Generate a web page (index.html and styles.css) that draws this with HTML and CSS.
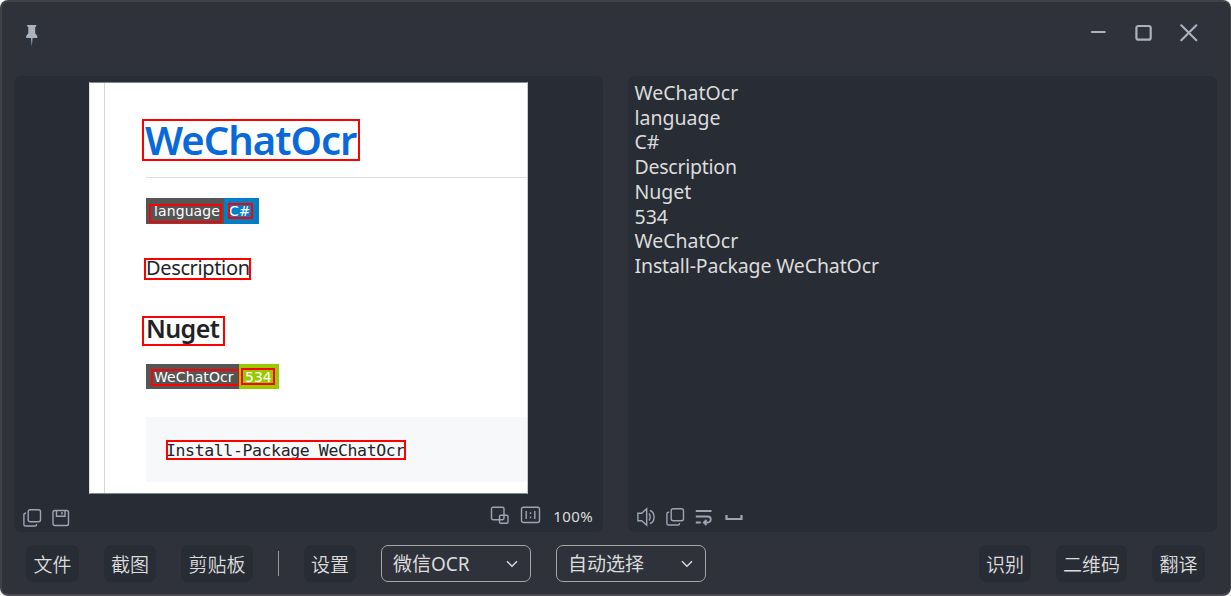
FILE: index.html
```html
<!DOCTYPE html>
<html lang="zh-CN">
<head>
<meta charset="utf-8">
<title>OCR</title>
<link rel="stylesheet" href="styles.css">
</head>
<body>
<div class="window">
  <header class="titlebar">
    <svg class="pin" width="12" height="22" viewBox="0 0 12 22"><path fill="currentColor" d="M1.2 0h9v1.6l-1 .5v6.2l2.1 2.6V13H6.6l-.8 8.500L5 13H.2v-2.100l2.100-2.600V2.100l-1.100-.5z"/></svg>
    <div class="controls">
      <svg width="16" height="18" viewBox="0 0 16 18"><path d="M1.800 8.100h13" stroke-width="2"/></svg>
      <svg width="18" height="18" viewBox="0 0 18 18"><rect x="2.400" y="2" width="14.300" height="13.700" rx="2" stroke-width="2.200"/></svg>
      <svg width="18" height="18" viewBox="0 0 18 18"><path d="M1.300 1.300l15 15M16.300 1.300l-15 15" stroke-width="2.100"/></svg>
    </div>
  </header>

  <main class="panels">
    <section class="panel">
      <div class="preview">
        <article class="doc">
          <h1 class="doc-title"><span class="t-title">WeChatOcr</span><i class="mark m-title"></i></h1>
          <div class="badge badge-lang">
            <span class="key">language<i class="mark m-lang"></i></span><span class="val blue">C#<i class="mark m-cs"></i></span>
          </div>
          <p class="desc">Description<i class="mark m-desc"></i></p>
          <h2 class="nuget">Nuget<i class="mark m-nuget"></i></h2>
          <div class="badge badge-nuget">
            <span class="key">WeChatOcr<i class="mark m-we"></i></span><span class="val green">534<i class="mark m-534"></i></span>
          </div>
          <pre class="code">Install-Package WeChatOcr<i class="mark m-code"></i></pre>
        </article>
      </div>
      <div class="tools">
        <svg class="i-copy" width="20" height="20" viewBox="0 0 20 20"><rect x="6.200" y="1.700" width="12.300" height="12" rx="2"/><path d="M4.100 5.200h-.6a1.600 1.600 0 0 0-1.600 1.600v9.600A1.600 1.600 0 0 0 3.500 18h9.400a1.600 1.600 0 0 0 1.600-1.600V16"/></svg>
        <svg class="i-save" width="18" height="20" viewBox="0 0 18 20"><rect x="1" y="2.500" width="15.500" height="15" rx="1.800"/><path d="M4.500 2.500v5.700h8.500V2.500M10 4v2.400"/></svg>
        <span class="spacer"></span>
        <svg class="i-fit" width="19" height="20" viewBox="0 0 19 20"><rect x="1.500" y="1.200" width="12.500" height="12.500" rx="1.600"/><rect x="9.500" y="9.200" width="8.500" height="8" rx="1.200"/></svg>
        <svg class="i-one" width="21" height="20" viewBox="0 0 21 20"><rect x="1.500" y="1.200" width="18" height="15.300" rx="2"/><path d="M6.200 5v8M14.800 5v8M10.500 6.300v1.700M10.500 10.500v1.700"/></svg>
        <span class="zoom">100%</span>
      </div>
    </section>

    <section class="panel">
      <div class="result">WeChatOcr<br>language<br>C#<br><span class="tight">Description</span><br>Nuget<br>534<br>WeChatOcr<br><span class="snug">Install-Package WeChatOcr</span></div>
      <div class="tools right">
        <svg width="20" height="20" viewBox="0 0 20 20"><path d="M1.900 6.200h3.800l5-4.500v16.600l-5-4.500H1.900zM12.900 6.500c1.700 1.800 1.700 5.200 0 7M13.900 3.500c5.500 1.500 5.500 11.500 0 13"/></svg>
        <svg class="i-copy2" width="20" height="20" viewBox="0 0 20 20"><rect x="6.200" y="1.700" width="12.300" height="12" rx="2"/><path d="M4.100 5.200h-.6a1.600 1.600 0 0 0-1.600 1.600v9.600A1.600 1.600 0 0 0 3.500 18h9.400a1.600 1.600 0 0 0 1.600-1.600V16"/></svg>
        <svg class="i-wrap" width="18" height="20" viewBox="0 0 18 20"><path stroke-width="1.800" d="M.8 4h15.700M.8 9.500h12a3 3 0 0 1 0 6H9.500M.8 15.500h5M11.500 12.800l-2.700 2.700 2.700 2.700"/></svg>
        <svg class="i-space" width="18" height="20" viewBox="0 0 18 20"><path stroke-width="2.200" d="M1.500 8v4h15V8"/></svg>
      </div>
    </section>
  </main>

  <footer class="toolbar">
    <button class="btn w53">文件</button>
    <button class="btn w52">截图</button>
    <button class="btn w72">剪贴板</button>
    <span class="sep"></span>
    <button class="btn w52">设置</button>
    <div class="select"><span>微信OCR</span><svg width="12" height="8" viewBox="0 0 12 8"><path d="M1 1.200l5 5 5-5"/></svg></div>
    <div class="select"><span>自动选择</span><svg width="12" height="8" viewBox="0 0 12 8"><path d="M1 1.200l5 5 5-5"/></svg></div>
    <span class="spacer"></span>
    <button class="btn w52">识别</button>
    <button class="btn w71">二维码</button>
    <button class="btn w53">翻译</button>
  </footer>
</div>
</body>
</html>
```
FILE: styles.css
```css
* { box-sizing: border-box; }
html { background: #fff; }
body { margin: 0; overflow: hidden; font-family: "Noto Sans", "Noto Sans CJK SC", sans-serif; color: #dcdcdc; }
svg { display: block; flex: none; fill: none; stroke: currentColor; stroke-width: 1.4; }
.window {
  width: 1231px; height: 596px; display: flex; flex-direction: column;
  background: #2f323b; border: 2px solid #404248; border-right-width: 1px; border-bottom-color: #4b4c53; border-radius: 8px;
  padding: 0 12px 12px; overflow: hidden;
}
.titlebar { height: 74px; flex: none; display: flex; justify-content: space-between; color: #abb2bf; padding: 22px 20px 0 12px; }
.pin { stroke: none; margin-top: 1px; }
.controls { display: flex; gap: 28px; stroke-linecap: round; }
.panels { display: grid; grid-template-columns: 589px 589px; gap: 25px; height: 456px; flex: none; }
.panel { background: #282c34; border-radius: 7px; display: flex; flex-direction: column; }
.preview {
  width: 439px; height: 412px; margin: 6px 0 0 75px; flex: none; background: #fff;
  border: 1px solid #85888e; border-left-color: #e2e3e6; border-right-color: #c8cacd; overflow: hidden; padding-left: 14px;
}
.doc { border-left: 1px solid #d1d9e0; height: 100%; padding-left: 41px; color: #1f2328; }
.doc-title, .desc, .nuget, .code, .key, .val { position: relative; margin: 0; }
.doc-title { height: 95px; border-bottom: 1px solid #dbe0e5; padding-top: 29px; font-size: 40px; line-height: 56px; font-weight: 600; color: #0969da; }
.t-title { letter-spacing: -1px; margin-left: -1px; }
.badge { display: flex; font: 14px/27px "DejaVu Sans", sans-serif; color: #fff; }
.badge-lang { height: 26px; margin-top: 20px; }
.badge-nuget { height: 25px; margin-top: 18px; }
.key { background: #555; padding-left: 8px; letter-spacing: .1px; }
.badge-lang .key { width: 78px; }
.badge-nuget .key { width: 93px; }
.blue { background: #007ec6; width: 35px; padding-left: 5px; }
.green { background: #97ca00; width: 40px; padding-left: 6px; }
.desc { margin-top: 31px; height: 26px; font-size: 20px; line-height: 26px; letter-spacing: -.36px; }
.nuget { margin-top: 31px; height: 34px; padding-top: 0; font-size: 25px; line-height: 33px; font-weight: 600; letter-spacing: -.6px; }
.code { margin-top: 28px; height: 65px; background: #f6f8fa; padding-left: 20px; font: 16.500px/67px "DejaVu Sans Mono", monospace; letter-spacing: -.38px; }
.mark { position: absolute; border: 2px solid #f00; }
.m-title { left: -4px; top: 36px; width: 218px; height: 42px; }
.m-lang { left: 3px; top: 6px; width: 73px; height: 19px; }
.m-cs { left: 4px; top: 5px; width: 25px; height: 16px; }
.m-desc { left: -2px; top: 3px; width: 107px; height: 22px; }
.m-nuget { left: -4px; top: 4px; width: 83px; height: 30px; }
.m-we { left: 5px; top: 5px; width: 89px; height: 17px; }
.m-534 { left: 2px; top: 4px; width: 34px; height: 17px; }
.m-code { left: 20px; top: 23px; width: 240px; height: 20px; }
.tools { display: flex; height: 38px; padding: 14px 10px 0 8px; color: #9da5b4; }
.i-save { margin-left: 10px; }
.i-fit { margin-top: -2px; }
.i-one { margin: -2px 0 0 11px; }
.zoom { margin-left: 12px; font-size: 15px; line-height: 20px; margin-top: -2px; letter-spacing: .4px; }
.zoom { color: #dcdcdc; }
.spacer { flex: 1; }
.i-copy2 { margin-left: 9px; }
.i-wrap { margin-left: 10px; }
.i-space { margin-left: 12px; }
.result { padding: 5px 6.500px; font-size: 19.500px; line-height: 24.700px; }
.tight { letter-spacing: -.25px; }
.snug { letter-spacing: -.13px; }
.right { margin-top: auto; height: 38px; padding-top: 13px; }
.toolbar { display: flex; padding: 13px 13px 0 12px; height: 50px; flex: none; gap: 25px; font-size: 19px; }
.btn { flex: none; height: 37px; padding: 0; border: 0; border-radius: 7px; background: #282c34; color: #dcdcdc; font: 19px/37px "Noto Sans CJK SC", sans-serif; font-weight: 350; white-space: nowrap; }
.w52 { width: 52px; }
.w53 { width: 53px; }
.w71 { width: 71px; }
.w72 { width: 72px; }
.sep { width: 1px; height: 25px; margin-top: 6px; background: #999; }
.select { width: 150px; height: 37px; flex: none; border: 1px solid #a5a6a8; border-radius: 7px; display: flex; align-items: center; justify-content: space-between; padding: 0 12px 0 11px; line-height: 35px; }
.select span { padding-top: 2px; }
```
